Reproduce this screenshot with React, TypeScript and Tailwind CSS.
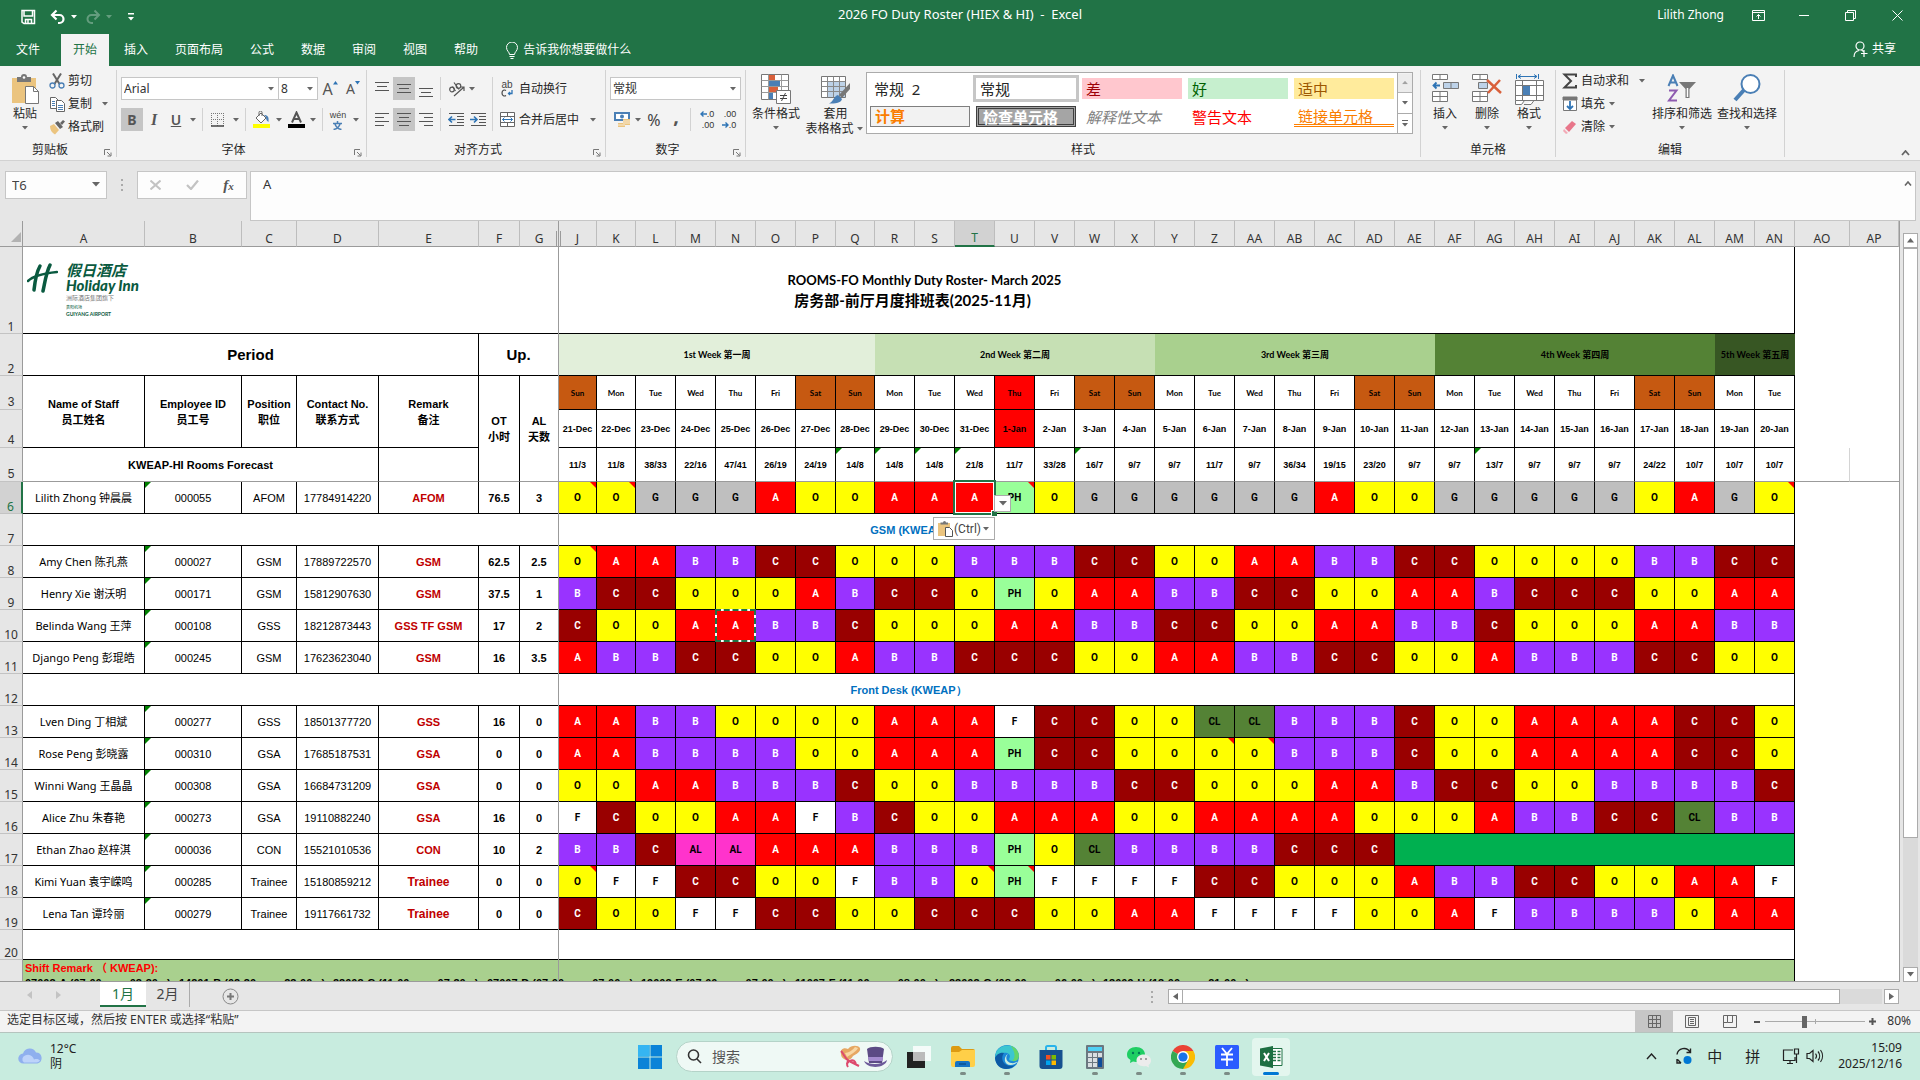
import React from "react";

const weeks = [
  { label: "1st Week 第一周", span: 8, cls: "bg-[#e2efda]" },
  { label: "2nd Week 第二周", span: 7, cls: "bg-[#c6e0b4]" },
  { label: "3rd Week 第三周", span: 7, cls: "bg-[#a9d08e]" },
  { label: "4th Week 第四周", span: 7, cls: "bg-[#548235]" },
  { label: "5th Week 第五周", span: 2, cls: "bg-[#375623]" },
];

const letters =
  "J K L M N O P Q R S T U V W X Y Z AA AB AC AD AE AF AG AH AI AJ AK AL AM AN".split(" ");

const days =
  "Sun Mon Tue Wed Thu Fri Sat Sun Mon Tue Wed Thu Fri Sat Sun Mon Tue Wed Thu Fri Sat Sun Mon Tue Wed Thu Fri Sat Sun Mon Tue".split(" ");

const dates =
  "21-Dec 22-Dec 23-Dec 24-Dec 25-Dec 26-Dec 27-Dec 28-Dec 29-Dec 30-Dec 31-Dec 1-Jan 2-Jan 3-Jan 4-Jan 5-Jan 6-Jan 7-Jan 8-Jan 9-Jan 10-Jan 11-Jan 12-Jan 13-Jan 14-Jan 15-Jan 16-Jan 17-Jan 18-Jan 19-Jan 20-Jan".split(" ");

const forecast =
  "11/3 11/8 38/33 22/16 47/41 26/19 24/19 14/8 14/8 14/8 21/8 11/7 33/28 16/7 9/7 9/7 11/7 9/7 36/34 19/15 23/20 9/7 9/7 13/7 9/7 9/7 9/7 24/22 10/7 10/7 10/7".split(" ");

const forecastFlags = ["Q", "R", "S", "T", "W", "AG"];

type Person = {
  row: number;
  name: string;
  id: string;
  pos: string;
  tel: string;
  remark: string;
  ot: string;
  al: string;
  shifts: string;
  notes?: string[];
};

const people: Person[] = [
  { row: 6, name: "Lilith Zhong 钟晨晨", id: "000055", pos: "AFOM", tel: "17784914220", remark: "AFOM", ot: "76.5", al: "3", shifts: "O O G G G A O O A A A PH O G G G G G G A O O G G G G G O A G O", notes: ["J", "K", "U", "AN"] },
  { row: 8, name: "Amy Chen 陈孔燕", id: "000027", pos: "GSM", tel: "17889722570", remark: "GSM", ot: "62.5", al: "2.5", shifts: "O A A B B C C O O O B B B C C O O A A B B C C O O O O B B C C", notes: ["J"] },
  { row: 9, name: "Henry Xie 谢沃明", id: "000171", pos: "GSM", tel: "15812907630", remark: "GSM", ot: "37.5", al: "1", shifts: "B C C O O O A B C C O PH O A A B B C C O O A A B C C C O O A A" },
  { row: 10, name: "Belinda Wang 王萍", id: "000108", pos: "GSS", tel: "18212873443", remark: "GSS TF GSM", ot: "17", al: "2", shifts: "C O O A A B B C O O O A A B B C C O O A A B B C O O O A A B B" },
  { row: 11, name: "Django Peng 彭琨皓", id: "000245", pos: "GSM", tel: "17623623040", remark: "GSM", ot: "16", al: "3.5", shifts: "A B B C C O O A B B C C C O O A A B B C C O O A B B B C C O O" },
  { row: 13, name: "Lven Ding 丁相斌", id: "000277", pos: "GSS", tel: "18501377720", remark: "GSS", ot: "16", al: "0", shifts: "A A B B O O O O A A A F C C O O CL CL B B B C O O A A A A C C O" },
  { row: 14, name: "Rose Peng 彭晓露", id: "000310", pos: "GSA", tel: "17685187531", remark: "GSA", ot: "0", al: "0", shifts: "A A B B B B O O A A A PH C C O O O O B B B C O O A A A A C C O", notes: ["Z", "AA"] },
  { row: 15, name: "Winni Wang 王晶晶", id: "000308", pos: "GSA", tel: "16684731209", remark: "GSA", ot: "0", al: "0", shifts: "O O A A B B B C O O B B B B C C O O O A A B C C O O B B B B C" },
  { row: 16, name: "Alice Zhu 朱春艳", id: "000273", pos: "GSA", tel: "19110882240", remark: "GSA", ot: "16", al: "0", shifts: "F C O O A A F B C O O A A A O O A A A A O O O A B B C C CL B B" },
  { row: 17, name: "Ethan Zhao 赵梓淇", id: "000036", pos: "CON", tel: "15521010536", remark: "CON", ot: "10", al: "2", shifts: "B B C AL AL A A A B B B PH O CL B B B B C C C" },
  { row: 18, name: "Kimi Yuan 袁宇嵘鸣", id: "000285", pos: "Trainee", tel: "15180859212", remark: "Trainee", ot: "0", al: "0", shifts: "O F F C C O O F B B O PH F F F F C C O O O A B B C C O O A A F", notes: ["J", "T", "U"] },
  { row: 19, name: "Lena Tan 谭玲丽", id: "000279", pos: "Trainee", tel: "19117661732", remark: "Trainee", ot: "0", al: "0", shifts: "C O O F F C C O O C C C O O A A F F F F O O A F B B B B O A A" },
];

const shiftColors: Record<string, string> = {
  O: "bg-[#ffff00]",
  A: "bg-[#ff0000] text-white",
  B: "bg-[#9933ff] text-white",
  C: "bg-[#990000] text-white",
  G: "bg-[#bfbfbf]",
  F: "bg-white",
  PH: "bg-[#99ff99]",
  CL: "bg-[#548235]",
  AL: "bg-[#ff33cc]",
};

const shiftTimes = [
  "07003-A (07:00 —— 03:30",
  "14201-B (02:30 —— 23:00",
  "23003-C (11:00 —— 07:30",
  "07007-D (07:00 —— 07:00",
  "19003-E (07:00 —— 07:00",
  "11007-F (11:00 —— 08:00",
  "23003-G (08:00 —— 06:00",
  "13009-H (13:00 —— 21:00",
];

const cell = "relative border-r border-b border-black p-0 text-center align-middle whitespace-nowrap";

const Caret = ({ className = "w-3" }: { className?: string }) => (
  <span className={`flex shrink-0 items-center justify-center ${className}`}>
    <svg width="6" height="4" viewBox="0 0 6 4" fill="#666">
      <path d="M0 0h6L3 3.5z" />
    </svg>
  </span>
);

const Sep = ({ className = "mx-[3px]" }: { className?: string }) => (
  <span className={`w-px shrink-0 self-stretch bg-[#d2d2d2] ${className}`} />
);

const Launcher = () => (
  <svg width="8" height="8" viewBox="0 0 8 8" fill="none" stroke="#777" className="absolute right-1 bottom-0">
    <path d="M.5 6V.5H6M3 3l3.5 3.5M7 3.5V7H3.5" />
  </svg>
);

const Group = ({ label, width, launcher, children }: { label: string; width: string; launcher?: boolean; children: React.ReactNode }) => (
  <section className={`relative flex h-[87px] shrink-0 flex-col border-r border-[#d2d2d2] ${width}`}>
    <div className="flex h-[73px]">{children}</div>
    <div className="text-center leading-[14px]">{label}</div>
    {launcher && <Launcher />}
  </section>
);

const Big = ({ icon, label, width, caret = true }: { icon: React.ReactNode; label: string; width: string; caret?: boolean }) => (
  <button className={`flex shrink-0 flex-col items-center pt-1 ${width}`}>
    <span className="flex h-8 items-start justify-center">{icon}</span>
    <span className="leading-[15px] whitespace-nowrap">{label}</span>
    {caret && <Caret className="h-3.5" />}
  </button>
);

const Tool = ({ children, width = "w-6", active }: { children: React.ReactNode; width?: string; active?: boolean }) => (
  <button className={`flex h-[23px] shrink-0 items-center justify-center ${width} ${active ? "bg-[#c5c5c5]" : ""}`}>{children}</button>
);

const Lines = ({ d }: { d: string }) => (
  <svg width="16" height="16" viewBox="0 0 16 16" stroke="#555" fill="none">
    <path d={d} />
  </svg>
);

const Combo = ({ value, label, width }: { value: string; label: string; width: string }) => (
  <span className={`relative shrink-0 ${width}`}>
    <select aria-label={label} defaultValue={value} className="h-[23px] w-full appearance-none border border-[#c6c6c6] bg-white px-0.5 text-[#333]">
      <option>{value}</option>
    </select>
    <Caret className="pointer-events-none absolute top-2.5 right-[5px]" />
  </span>
);

const TitleBar = () => (
  <header className="grid h-[34px] shrink-0 grid-cols-3 items-center bg-[#217346] pb-1 text-white">
    <div className="flex items-center pt-1 pl-5">
      <button aria-label="Save" className="w-[30px]">
        <svg width="16" height="16" viewBox="0 0 16 16" fill="none" stroke="#fff" strokeWidth="1.5">
          <path d="M2 1.5h12.5v13H4L2 13zM4 2v5h8.500V2M5.500 14.500v-4h6v4" />
          <path d="M8 11v3" />
        </svg>
      </button>
      <button aria-label="Undo" className="w-[17px]">
        <svg width="16" height="16" viewBox="0 0 16 16" fill="none" stroke="#fff" strokeWidth="2.200">
          <path d="M2 6h7.500a4 4 0 0 1 0 8H8M6.500 1.500 2 6l4.500 4.500" />
        </svg>
      </button>
      <svg width="6" height="4" className="ml-1" fill="#fff"><path d="M0 0h6L3 3.500z" /></svg>
      <button aria-label="Redo" className="ml-2 w-[17px] opacity-30">
        <svg width="16" height="16" viewBox="0 0 16 16" fill="none" stroke="#fff" strokeWidth="2">
          <path d="M14 6H6.500a4 4 0 0 0 0 8H8M9.500 1.500 14 6l-4.500 4.500" />
        </svg>
      </button>
      <svg width="6" height="4" className="ml-1 opacity-30" fill="#fff"><path d="M0 0h6L3 3.500z" /></svg>
      <svg width="6" height="8" className="ml-4" fill="#fff"><path d="M0 0h6v1.500H0zM0 4h6L3 7.500z" /></svg>
    </div>
    <h1 className="text-center text-[13px] font-normal whitespace-pre">2026 FO Duty Roster (HIEX &amp; HI)  -  Excel</h1>
    <div className="flex items-center justify-end">
      <span className="mr-5">Lilith Zhong</span>
      <button aria-label="Ribbon options" className="flex w-[46px] justify-center pr-[18px]">
        <svg width="13" height="11" viewBox="0 0 13 11" fill="none" stroke="#fff"><path d="M.5.5h12v10H.5zM.5 2.500h12M6.500 9V4.500M4.500 6.500l2-2 2 2" /></svg>
      </button>
      <button aria-label="Minimize" className="flex w-[46px] justify-center pr-[18px]">
        <svg width="10" height="10" stroke="#fff"><path d="M0 5.500h10" /></svg>
      </button>
      <button aria-label="Restore" className="flex w-[46px] justify-center pr-[18px]">
        <svg width="11" height="11" viewBox="0 0 11 11" fill="none" stroke="#fff"><path d="M.5 2.500h8v8h-8zM2.500 2.500v-2h8v8h-2" /></svg>
      </button>
      <button aria-label="Close" className="flex w-[38px] justify-center pr-2">
        <svg width="11" height="11" viewBox="0 0 11 11" stroke="#fff"><path d="M.5.5l10 10M10.500.5l-10 10" /></svg>
      </button>
    </div>
  </header>
);

const Tabs = () => (
  <nav className="flex h-8 shrink-0 items-stretch bg-[#217346] text-white">
    <button className="w-[58px] pr-0.5">文件</button>
    <div className="ml-[3px] flex gap-[3px]">
      <button className="bg-[#f3f3f3] px-3 text-[#217346]">开始</button>
      {["插入", "页面布局", "公式", "数据", "审阅", "视图", "帮助"].map((t) => (
        <button key={t} className="px-3">{t}</button>
      ))}
    </div>
    <button className="ml-4 flex items-center gap-[5px]">
      <svg width="12" height="17" viewBox="0 0 12 17" fill="none" stroke="#fff"><path d="M3.500 12.500c0-2.500-3-3.500-3-7a5.300 5.300 0 0 1 11 0c0 3.500-3 4.500-3 7zM3.500 14.500h5M4.500 16.500h3" /></svg>
      告诉我你想要做什么
    </button>
    <button className="mr-6 ml-auto flex items-center gap-1 pb-0.5">
      <svg width="15" height="17" viewBox="0 0 15 17" fill="none" stroke="#fff" strokeWidth="1.200"><circle cx="7" cy="5" r="4" /><path d="M1 16c0-4 2-6 5-6.500M8.500 9l2 1.500M11 9v7M8 12.500h6.500" /></svg>
      共享
    </button>
  </nav>
);

const Ribbon = () => (
  <div className="flex h-[95px] shrink-0 border-b border-[#d2d2d2] bg-[#f3f3f3] pt-1">
    <Group label="剪贴板" width="w-[117px] pr-4" launcher>
      <Big
        width="ml-[3px] w-[44px]"
        label="粘贴"
        icon={
          <svg width="30" height="31" viewBox="0 0 30 31">
            <path d="M2 4h24v25H2z" fill="#ebc47f" />
            <path d="M7 3h4a3 3 0 0 1 6 0h4v5H7z" fill="#777" />
            <circle cx="14" cy="3.500" r="1.300" fill="#fff" />
            <path d="M15.500 12.500h8l5 5v12h-13z" fill="#fff" stroke="#777" />
            <path d="M23.500 12.500v5h5" fill="none" stroke="#777" />
          </svg>
        }
      />
      <div className="ml-0.5 flex shrink-0 flex-col whitespace-nowrap">
        <button className="flex h-[22px] items-center gap-[3px]">
          <svg width="16" height="16" viewBox="0 0 16 16" fill="none"><path d="M4 .5 10.500 11M12 .5 5.500 11" stroke="#666" strokeWidth="2" /><circle cx="3.500" cy="12.500" r="2.500" stroke="#4a7fb5" strokeWidth="1.300" /><circle cx="12.500" cy="12.500" r="2.500" stroke="#4a7fb5" strokeWidth="1.300" /></svg>
          剪切
        </button>
        <button className="flex h-6 items-center gap-[3px]">
          <svg width="16" height="16" viewBox="0 0 16 16" fill="#fff" stroke="#666"><path d="M1.500 1.500h5l3 3v8h-8z" /><path d="M7.500 4.500h5l3 3v8h-8z" /><path d="M3 5.500h3M3 7.500h3M3 9.500h3M9 9.500h5M9 11.500h5M9 13.500h5" stroke="#4a7fb5" /></svg>
          复制
          <Caret className="ml-1 w-3" />
        </button>
        <button className="flex h-[22px] items-center gap-[3px]">
          <svg width="16" height="16" viewBox="0 0 16 16"><path d="M1 7l4-2 5 6-4 4.500C3 14 1 11 1 7z" fill="#ebc47f" /><path d="M6 4l3-2 5 6-3 2zM11 4l3-3 2 1.500-3 3.500z" fill="#666" /></svg>
          格式刷
        </button>
      </div>
    </Group>

    <Group label="字体" width="w-[250px] pr-4" launcher>
      <div className="flex flex-col gap-2 pt-[7px] pl-1">
        <div className="flex">
          <Combo label="字体" value="Arial" width="w-[158px]" />
          <Combo label="字号" value="8" width="-ml-px w-[40px]" />
          <Tool width="w-6">
            <span className="text-base text-[#555]">A</span>
            <svg width="5" height="4" className="mb-3" fill="#2e74b5"><path d="M0 3.500h5L2.500 0z" /></svg>
          </Tool>
          <Tool width="w-[22px]">
            <span className="text-sm text-[#555]">A</span>
            <svg width="5" height="4" className="mb-3" fill="#2e74b5"><path d="M0 0h5L2.500 3.500z" /></svg>
          </Tool>
        </div>
        <div className="flex">
          <Tool width="w-[22px]" active><b className="text-sm text-[#555]">B</b></Tool>
          <Tool width="w-[22px]"><i className="font-[Liberation_Serif] text-base font-bold text-[#555]">I</i></Tool>
          <Tool width="w-[22px]"><u className="text-sm font-semibold text-[#555]">U</u></Tool>
          <Caret />
          <Sep />
          <Tool><svg width="14" height="14" viewBox="0 0 14 14" fill="none" stroke="#777"><path d="M.5 0v13M6.500 0v13M12.500 0v13M0 .5h13M0 6.500h13" strokeDasharray="1 1" /><path d="M0 13h13" stroke="#444" strokeWidth="1.500" /></svg></Tool>
          <Caret />
          <Sep />
          <Tool><svg width="17" height="17" viewBox="0 0 17 17"><path d="M0 13h17v4H0z" fill="#ff0" /><path d="M3 7l5-5 5 5-5 5z" fill="#fff" stroke="#666" /><path d="M6 5V1.500a1.500 1.500 0 0 1 3 0V5" fill="none" stroke="#666" /><path d="M11 4c4 0 5 2 4.500 7-2-1-2.500-3-2.500-5z" fill="#4a7fb5" /></svg></Tool>
          <Caret />
          <Tool width="w-[22px]"><svg width="17" height="17" viewBox="0 0 17 17"><path d="M0 13h17v4H0z" /><path d="M4 11.500 8.500 1.500l4.500 10M5.500 8h6" fill="none" stroke="#555" strokeWidth="2" /></svg></Tool>
          <Caret />
          <Sep />
          <Tool>
            <span className="flex flex-col items-center font-[Liberation_Sans,Noto_Sans_CJK_SC] text-[9px] leading-[11px] text-[#444]">
              wén
              <svg width="9" height="9" viewBox="0 0 9 9" fill="none" stroke="#4a7fb5" strokeWidth="1.500"><path d="M4.500 0v2M0 2.500h9M7 3C6 6 4 8 .5 8.500M2 3c1 3 3 5 6.500 5.500" /></svg>
            </span>
          </Tool>
          <Caret />
        </div>
      </div>
    </Group>

    <Group label="对齐方式" width="w-[239px] pr-4" launcher>
      <div className="flex pt-[7px] pl-1">
        <div className="flex flex-col gap-2">
          <div className="flex">
            <Tool width="w-[22px]"><Lines d="M1 1.500h14M3 5.500h10M1 9.500h14" /></Tool>
            <Tool width="w-[22px]" active><Lines d="M1 3.500h14M3 7.500h10M1 11.500h14" /></Tool>
            <Tool width="w-[22px]"><Lines d="M1 7.500h14M3 11.500h10M1 15.500h14" /></Tool>
            <Sep />
            <Tool><svg width="17" height="16" viewBox="0 0 17 16" fill="none" stroke="#555" strokeWidth="1.200"><circle cx="4" cy="8.500" r="2.300" /><path d="M4.500 5.500l3 4.500M6 1.500l5 7" /><circle cx="10.500" cy="5" r="2.300" /><path d="M6 15 15.500 6.500M12 6h4v4" /></svg></Tool>
            <Caret className="w-2" />
          </div>
          <div className="flex">
            <Tool width="w-[22px]"><Lines d="M1 1.500h14M1 5.500h9M1 9.500h14M1 13.500h9" /></Tool>
            <Tool width="w-[22px]" active><Lines d="M1 1.500h14M3 5.500h10M1 9.500h14M3 13.500h10" /></Tool>
            <Tool width="w-[22px]"><Lines d="M1 1.500h14M6 5.500h9M1 9.500h14M6 13.500h9" /></Tool>
            <Sep />
            <Tool><svg width="16" height="14" viewBox="0 0 16 14" fill="none" stroke="#555"><path d="M1 .5h15M9 3.500h7M9 6.500h7M9 9.500h7M1 12.500h15" /><path d="M7.500 6.500H1M4 3.500l-3 3 3 3" stroke="#2e74b5" strokeWidth="1.600" /></svg></Tool>
            <Tool width="w-5"><svg width="16" height="14" viewBox="0 0 16 14" fill="none" stroke="#555"><path d="M1 .5h15M9 3.500h7M9 6.500h7M9 9.500h7M1 12.500h15" /><path d="M0 6.500h6.500M4 3.500l3 3-3 3" stroke="#2e74b5" strokeWidth="1.600" /></svg></Tool>
          </div>
        </div>
        <Sep className="mx-1 mb-3" />
        <div className="flex flex-col gap-2 whitespace-nowrap">
          <button className="flex h-[23px] items-center gap-0.5">
            <span className="flex w-5 flex-col items-center font-[Liberation_Sans] text-[10px] leading-[9px] text-[#444]">
              ab
              <svg width="12" height="8" viewBox="0 0 12 8" fill="none"><path d="M5 1.500C3.500.5 1 1 1 4s2.500 3.500 4 2.500" stroke="#444" strokeWidth="1.200" /><path d="M11 1v3.500H7.500M9 3 7.500 4.500 9 6" stroke="#2e74b5" strokeWidth="1.300" /></svg>
            </span>
            自动换行
          </button>
          <button className="flex h-[23px] items-center gap-0.5">
            <span className="flex w-5 justify-center">
              <svg width="15" height="15" viewBox="0 0 15 15" fill="#fff" stroke="#666"><path d="M.5.5h14v14H.5zM.5 4.500h14M.5 10.500h14M7.500.5v4M7.500 10.500v4" /><path d="M2.500 7.500h10M4.500 5.500l-2 2 2 2M10.500 5.500l2 2-2 2" fill="none" stroke="#2e74b5" /></svg>
            </span>
            合并后居中
            <Caret className="ml-1.5 w-3" />
          </button>
        </div>
      </div>
    </Group>

    <Group label="数字" width="w-[140px] pr-4" launcher>
      <div className="flex flex-col gap-2 pt-[7px] pl-1">
        <Combo label="数字格式" value="常规" width="w-[131px]" />
        <div className="flex">
          <Tool><svg width="17" height="17" viewBox="0 0 17 17"><path d="M0 1h16v9H0z" fill="#4a7fb5" /><path d="M2 3h12v5H2z" fill="#fff" /><circle cx="8" cy="5.500" r="2" fill="#4a7fb5" /><path d="M9 8h7v6H9zM4 12h7v4H4z" fill="#ebc47f" /><path d="M9 10h7M9 12h7M4 14h7" stroke="#fff" strokeWidth=".7" /></svg></Tool>
          <Caret className="w-2" />
          <Tool><span className="text-base text-[#444]">%</span></Tool>
          <Tool width="w-5"><b className="mb-2 text-xl text-[#555]">,</b></Tool>
          <Sep className="mx-1" />
          <Tool>
            <span className="flex flex-col items-end font-[Liberation_Sans] text-[9px] leading-[11px] text-[#333]">
              <span className="flex items-center"><svg width="7" height="6" viewBox="0 0 7 6" fill="none" stroke="#2e74b5" strokeWidth="1.400"><path d="M7 3H1M3.500.5 1 3l2.500 2.500" /></svg>.0</span>
              <span>.00</span>
            </span>
          </Tool>
          <Tool width="w-5">
            <span className="flex flex-col items-end font-[Liberation_Sans] text-[9px] leading-[11px] text-[#333]">
              <span>.00</span>
              <span className="flex items-center"><svg width="7" height="6" viewBox="0 0 7 6" fill="none" stroke="#2e74b5" strokeWidth="1.400"><path d="M0 3h6M3.500.5 6 3 3.500 5.500" /></svg>.0</span>
            </span>
          </Tool>
        </div>
      </div>
    </Group>

    <Group label="样式" width="w-[675px]">
      <Big
        width="ml-[5px] w-[50px]"
        label="条件格式"
        icon={
          <svg width="31" height="31" viewBox="0 0 31 31">
            <path d="M.5.500h27v25H.5z" fill="#fff" stroke="#777" />
            <path d="M.5 6.500h27M.5 12.500h27M.5 18.500h27M7.500.500v25M20.500.500v25" stroke="#999" />
            <path d="M8 1h6v5H8zM8 13h9v5H8z" fill="#d9603b" />
            <path d="M8 7h11v5H8zM8 19h4v6H8z" fill="#4a7fb5" />
            <path d="M15.500 16.500h14v13h-14z" fill="#fff" stroke="#777" />
            <path d="M19 21.500h7M19 24.500h7M24.500 19l-4 8" stroke="#444" />
          </svg>
        }
      />
      <button className="ml-1 flex w-[61px] shrink-0 flex-col items-center pt-1">
        <svg width="30" height="30" viewBox="0 0 30 30">
          <path d="M.5 2.500h24v21H.5z" fill="#fff" stroke="#777" />
          <path d="M6 8h18v15H6z" fill="#bdd2e8" />
          <path d="M.5 7.500h24M.5 12.500h24M.5 17.500h24M6.500 2.500v21M12.500 2.500v21M18.500 2.500v21" stroke="#888" fill="none" />
          <path d="M29 9v6l-8 9-3-3z" fill="#777" />
          <path d="M17 21l4 4c-1 4-7 5-13 4.500 4-1.500 5-7.500 9-8.500z" fill="#4a7fb5" />
        </svg>
        <span className="mt-0.5 leading-[15px]">套用</span>
        <span className="flex leading-[15px] whitespace-nowrap">表格格式<Caret className="w-3" /></span>
      </button>
      <div className="mt-0.5 flex h-[62px] w-[547px] shrink-0 border border-[#ababab] bg-white">
        <div className="grid grid-cols-[repeat(5,100px)] content-start gap-x-1.5 gap-y-[7px] pt-[5px] pl-[3px] text-[15px] leading-5 *:h-[21px] *:px-1 *:text-left">
          <button>常规&nbsp; 2</button>
          <button className="bg-white outline-3 outline-[#c6c6c6]">常规</button>
          <button className="bg-[#ffc7ce] text-[#9c0006]">差</button>
          <button className="bg-[#c6efce] text-[#006100]">好</button>
          <button className="bg-[#ffeb9c] text-[#9c5700]">适中</button>
          <button className="border border-[#7f7f7f] bg-[#f2f2f2] leading-[17px] font-bold text-[#fa7d00]">计算</button>
          <button className="border-3 border-double border-[#3f3f3f] bg-[#a5a5a5] leading-3 font-bold text-white">检查单元格</button>
          <button className="text-[#7f7f7f] italic">解释性文本</button>
          <button className="text-[#ff0000]">警告文本</button>
          <button className="border-b-3 border-double border-[#ff8001] text-[#fa7d00]">链接单元格</button>
        </div>
        <div className="ml-auto flex w-[15px] flex-col border-l border-[#ababab]">
          <button aria-label="上一行" className="flex flex-1 rotate-180 items-center justify-center bg-[#e1e1e1] opacity-60"><Caret /></button>
          <button aria-label="下一行" className="flex flex-1 items-center justify-center border-t border-[#ababab]"><Caret /></button>
          <button aria-label="其他" className="flex flex-1 flex-col items-center justify-center gap-0.5 border-t border-[#ababab]"><span className="h-px w-1.5 bg-[#666]" /><Caret /></button>
        </div>
      </div>
    </Group>

    <Group label="单元格" width="w-[135px]">
      <Big width="ml-[3px] w-[42px]" label="插入" icon={
        <svg width="27" height="28" viewBox="0 0 27 28" fill="#fff" stroke="#777">
          <path d="M.5.500h15v5H.5zM8 .5v5M.5 17.500h15v10H.5zM8 17.500v10M.5 22.500h15" />
          <path d="M11.500 8.500h15v6h-15z" fill="#bdd2e8" /><path d="M19 8.500v6" />
          <path d="M8 11.500H1.500M4.500 8.500l-3 3 3 3" fill="none" stroke="#2e74b5" strokeWidth="1.800" />
        </svg>
      } />
      <Big width="w-[42px]" label="删除" icon={
        <svg width="30" height="28" viewBox="0 0 30 28" fill="#fff" stroke="#777">
          <path d="M.5.500h15v5H.5zM8 .5v5M.5 17.500h15v10H.5zM8 17.500v10M.5 22.500h15" />
          <path d="M6.500 8.500h9v6h-9z" fill="#bdd2e8" />
          <path d="M15 6l14 13M28 6 16 19" stroke="#d9603b" strokeWidth="2.500" />
        </svg>
      } />
      <Big width="w-[42px]" label="格式" icon={
        <svg width="29" height="31" viewBox="0 0 29 31" fill="#fff" stroke="#777">
          <path d="M.5 6.500h28v20H.5zM.5 11.500h28M.5 21.500h28M7.500 6.500v20M21.500 6.500v20M.5 26.500v4h6l3-4M9 30.500h7l3-4" />
          <path d="M8 12h7v9H8z" fill="#4a7fb5" stroke="none" />
          <path d="M1.500 0v5M23.500 0v5M3 2.500h19M6 .5l-3 2 3 2M19 .5l3 2-3 2" stroke="#2e74b5" fill="none" />
        </svg>
      } />
    </Group>

    <Group label="编辑" width="w-[229px]">
      <div className="flex w-[92px] shrink-0 flex-col pl-1.5 whitespace-nowrap *:gap-[3px]">
        <button className="flex h-[22px] items-center">
          <svg width="16" height="16" viewBox="0 0 16 16" fill="none" stroke="#444" strokeWidth="2" className="shrink-0"><path d="M14 4V1.500H2.500L9 8l-6.500 6.500H14V12" /></svg>
          自动求和<Caret className="ml-1 w-3" />
        </button>
        <button className="flex h-6 items-center">
          <svg width="16" height="16" viewBox="0 0 16 16" fill="#fff" stroke="#777" className="shrink-0"><path d="M1.500 1.500h13v13h-13z" /><path d="M1 1h14v3H1z" fill="#777" /><path d="M8 5v8M5 10l3 3 3-3" fill="none" stroke="#2e74b5" strokeWidth="1.800" /></svg>
          填充<Caret className="w-2" />
        </button>
        <button className="flex h-[22px] items-center">
          <svg width="16" height="16" viewBox="0 0 16 16" className="shrink-0"><path d="M3 9l7-7 4 3-7 8z" fill="#e8768a" /><path d="M2 10l4 4-2 1-3-3z" fill="#f3aab6" /></svg>
          清除<Caret className="w-2" />
        </button>
      </div>
      <Big width="ml-px w-[66px]" label="排序和筛选" icon={
        <svg width="30" height="28" viewBox="0 0 30 28" fill="none">
          <path d="M1.500 12 6 1.500 10.500 12M3 8.500h6" stroke="#4a7fb5" strokeWidth="2" />
          <path d="M2 16.500h7.500L2 26.500h8" stroke="#8e5bb0" strokeWidth="2" />
          <path d="M12 8h17l-6.500 7v9h-4v-9z" fill="#777" />
          <path d="M20.500 14v9" stroke="#fff" strokeWidth="1.500" />
        </svg>
      } />
      <Big width="w-[64px]" label="查找和选择" icon={
        <svg width="28" height="28" viewBox="0 0 28 28"><path d="M11 16 2 26" stroke="#4a7fb5" strokeWidth="4" /><circle cx="17.500" cy="10" r="9" fill="#fff" stroke="#4a7fb5" strokeWidth="2" /></svg>
      } />
    </Group>
    <button aria-label="折叠功能区" className="mr-2.5 mb-1 ml-auto self-end">
      <svg width="9" height="6" viewBox="0 0 9 6" fill="none" stroke="#666" strokeWidth="1.800"><path d="M1 5l3.500-4L8 5" /></svg>
    </button>
  </div>
);

const FormulaBar = () => (
  <div className="flex h-[60px] shrink-0 items-start bg-[#e6e6e6] pt-2.5 pr-1 pl-[5px]">
    <div className="relative">
      <input aria-label="名称框" defaultValue="T6" className="h-7 w-[102px] border border-[#c6c6c6] bg-[#fdfdfd] px-1.5 text-[13px] text-[#444]" />
      <svg width="8" height="5" fill="#666" className="absolute top-[11px] right-[7px]"><path d="M0 0h8L4 4.500z" /></svg>
    </div>
    <div className="flex h-7 w-[30px] flex-col items-center justify-center gap-[3px]">
      <i className="size-0.5 bg-[#aaa]" /><i className="size-0.5 bg-[#aaa]" /><i className="size-0.5 bg-[#aaa]" />
    </div>
    <div className="flex h-7 w-[110px] items-center justify-around border border-[#c6c6c6] bg-[#fdfdfd]">
      <button aria-label="取消"><svg width="11" height="10" viewBox="0 0 11 10" stroke="#c3c3c3" strokeWidth="2"><path d="M.5.500l10 9M10.500.500l-10 9" /></svg></button>
      <button aria-label="输入"><svg width="13" height="10" viewBox="0 0 13 10" fill="none" stroke="#c3c3c3" strokeWidth="2.200"><path d="M1 5l4 4 7-8.500" /></svg></button>
      <button aria-label="插入函数" className="font-[Liberation_Serif] text-[15px] font-bold text-[#555] italic">f<span className="text-[11px]">x</span></button>
    </div>
    <textarea aria-label="编辑栏" defaultValue="A" className="ml-[3px] h-[50px] flex-1 resize-none border border-[#c6c6c6] bg-[#fdfdfd] px-3 py-[3px] text-[13px] text-[#333]" />
    <svg width="8" height="5" viewBox="0 0 8 5" fill="none" stroke="#666" strokeWidth="1.600" className="mt-2.5 mr-1 -ml-3"><path d="M1 4.500 4 1l3 3.500" /></svg>
  </div>
);

const RowHead = ({ n, active }: { n: number; active?: boolean }) => (
  <th
    scope="row"
    className={`border-b border-b-[#c3c3c3] p-0 text-center align-bottom text-[12px] leading-[13px] font-normal ${
      active ? "border-r-2 border-r-[#217346] bg-[#d2d2d2] text-[#217346]" : "border-r border-r-[#9b9b9b] bg-[#e6e6e6] text-[#333]"
    }`}
  >
    {n}
  </th>
);

const Flag = () => <i className="absolute top-0 left-0 size-[6px] bg-[#008000] [clip-path:polygon(0_0,100%_0,0_100%)]" />;
const Note = () => <i className="absolute top-0 right-0 size-[6px] bg-[#ff0000] [clip-path:polygon(0_0,100%_0,100%_100%)]" />;

const Logo = () => (
  <div className="absolute top-4 left-1 flex items-start gap-2 text-left font-normal text-[#0a5a40]">
    <svg width="31" height="30" viewBox="0 0 31 30" fill="none" stroke="#0a5a40" strokeLinecap="round">
      <path d="M13 3C9 10 8 18 7 27" strokeWidth="3.500" />
      <path d="M23 2C19 10 18 19 16 28" strokeWidth="3.500" />
      <path d="M1 18C7 12 20 10 30 9" strokeWidth="2.500" />
    </svg>
    <div className="flex flex-col">
      <b className="text-[15px] leading-[15px] italic">假日酒店</b>
      <b className="font-[Lato] text-[15px] leading-[15px] font-black italic">Holiday Inn</b>
      <span className="text-[6px] leading-[10px] text-[#777]">洲际酒店集团旗下</span>
      <span className="text-[4px] leading-[9px]">贵阳机场</span>
      <b className="text-[5px] leading-[5px]">GUIYANG AIRPORT</b>
    </div>
  </div>
);

const ActiveOverlay = () => (
  <>
    <span className="absolute -inset-0.5 z-10 border-2 border-[#217346]">
      <span className="block size-full border border-white" />
      <span className="absolute -right-[3px] -bottom-[3px] size-[6px] border-t border-l border-white bg-[#217346]" />
    </span>
    <button aria-label="选择班次" className="absolute top-[13px] left-full z-20 flex size-[17px] items-center justify-center border border-[#ababab] bg-white">
      <svg width="8" height="5" fill="#666"><path d="M0 0h8L4 4.500z" /></svg>
    </button>
    <button className="absolute top-[35px] -left-[22px] z-20 flex h-[23px] w-[62px] items-center justify-center gap-px border border-[#ababab] bg-white text-[12px] font-normal text-[#444]">
      <svg width="15" height="17" viewBox="0 0 15 17"><path d="M0 3h12v13H0z" fill="#ebc47f" /><path d="M2.500 4.500V2.500H5a1.500 1.500 0 0 1 3 0h2v2z" fill="#777" /><path d="M7.500 7.500h4l3 3v6h-7z" fill="#fff" stroke="#555" /></svg>
      (Ctrl)
      <Caret className="w-2" />
    </button>
  </>
);

const StaffRow = ({ p }: { p: Person }) => {
  const shifts = p.shifts.split(" ");
  return (
    <tr className="h-8">
      <RowHead n={p.row} active={p.row === 6} />
      <td className={cell}>{p.name}</td>
      <td className={`${cell} font-[Liberation_Sans]`}><Flag />{p.id}</td>
      <td className={`${cell} font-[Liberation_Sans]`}>{p.pos}</td>
      <td className={`${cell} font-[Liberation_Sans]`}>{p.tel}</td>
      <td className={`${cell} font-[Liberation_Sans] font-bold text-[#c00000] ${p.remark === "Trainee" ? "text-[12px]" : ""}`}>{p.remark}</td>
      <td className={`${cell} font-[Liberation_Sans] font-bold`}>{p.ot}</td>
      <td className={`${cell} border-r-[#9b9b9b] font-[Liberation_Sans] font-bold`}>{p.al}</td>
      {shifts.map((s, i) => (
        <td key={letters[i]} className={`${cell} font-[Roboto] text-[10px] font-bold ${shiftColors[s]}`}>
          {s}
          {p.notes?.includes(letters[i]) && <Note />}
          {p.row === 6 && letters[i] === "T" && <ActiveOverlay />}
          {p.row === 10 && letters[i] === "N" && (
            <span className="absolute -inset-px border-2 border-white">
              <span className="absolute -inset-0.5 border-2 border-dashed border-[#217346]" />
            </span>
          )}
        </td>
      ))}
      {shifts.length < 31 && <td colSpan={31 - shifts.length} className={`${cell} bg-[#00b050]`} />}
      <td colSpan={2} />
    </tr>
  );
};

const Band = ({ n, height, children }: { n: number; height: string; children?: React.ReactNode }) => (
  <tr className={height}>
    <RowHead n={n} />
    <td colSpan={38} className={`${cell} font-[Liberation_Sans] font-bold text-[#0070c0]`}>{children}</td>
    <td colSpan={2} />
  </tr>
);

const ColHead = ({ name }: { name: string }) => (
  <th
    scope="col"
    className={`border-r border-r-[#bdbdbd] p-0 align-bottom font-normal ${
      name === "T" ? "border-b-2 border-b-[#217346] bg-[#d2d2d2] leading-[14px] text-[#217346]" : "border-b border-b-[#9b9b9b] leading-[15px]"
    }`}
  >
    {name}
  </th>
);

const Sheet = () => (
  <div className="relative min-w-0 flex-1 overflow-hidden border-r border-b border-[#9b9b9b] bg-white">
    <table className="w-full table-fixed border-separate border-spacing-0 text-[11px] leading-4 text-black">
      <colgroup>
        <col className="w-[23px]" />
        <col className="w-[122px]" />
        <col className="w-[97px]" />
        <col className="w-[55px]" />
        <col className="w-[82px]" />
        <col className="w-[100px]" />
        <col className="w-[41px]" />
        <col className="w-[39px]" />
        {letters.map((l) => (
          <col key={l} className={l === "J" ? "w-[38px]" : l === "K" || l === "Q" ? "w-[39px]" : "w-[40px]"} />
        ))}
        <col className="w-[55px]" />
        <col />
      </colgroup>
      <thead>
        <tr className="h-[26px] bg-[#e6e6e6] text-[12px] text-[#333]">
          <td className="border-r border-b border-[#9b9b9b] p-0 align-bottom">
            <svg width="10" height="10" className="mb-1 ml-[11px]" fill="#b2b2b2"><path d="M10 0v10H0z" /></svg>
          </td>
          {["A", "B", "C", "D", "E", "F", "G", ...letters, "AO", "AP"].map((c) => (
            <ColHead key={c} name={c} />
          ))}
        </tr>
      </thead>
      <tbody>
        <tr className="h-[87px]">
          <RowHead n={1} />
          <td colSpan={38} className={`${cell} font-[Lato,Noto_Sans_CJK_SC,sans-serif] font-bold`}>
            <Logo />
            <p className="ml-8 text-[13px] leading-5">ROOMS-FO Monthly Duty Roster- March 2025</p>
            <p className="ml-2 text-[15px] leading-5">房务部-前厅月度排班表(2025-11月)</p>
          </td>
          <td colSpan={2} />
        </tr>
        <tr className="h-[42px]">
          <RowHead n={2} />
          <th colSpan={5} className={`${cell} font-[Liberation_Sans] text-[15px]`}>Period</th>
          <th colSpan={2} className={`${cell} border-r-[#9b9b9b] font-[Liberation_Sans] text-[15px]`}>Up.</th>
          {weeks.map((w) => (
            <th key={w.label} colSpan={w.span} className={`border-b border-black p-0 font-[Lato,Noto_Sans_CJK_SC,sans-serif] text-[9px] whitespace-nowrap ${w.cls}`}>{w.label}</th>
          ))}
          <td colSpan={2} />
        </tr>
        <tr className="h-[34px] font-[Liberation_Sans,Noto_Sans_CJK_SC,sans-serif]">
          <RowHead n={3} />
          <th rowSpan={2} className={cell}>Name of Staff<br />员工姓名</th>
          <th rowSpan={2} className={cell}>Employee ID<br />员工号</th>
          <th rowSpan={2} className={cell}>Position<br />职位</th>
          <th rowSpan={2} className={cell}>Contact No.<br />联系方式</th>
          <th rowSpan={2} className={cell}>Remark<br />备注</th>
          <th rowSpan={3} className={`${cell} border-b-[#9b9b9b]`}>OT<br />小时</th>
          <th rowSpan={3} className={`${cell} border-r-[#9b9b9b] border-b-[#9b9b9b]`}>AL<br />天数</th>
          {days.map((d, i) => (
            <th key={i} className={`${cell} font-[Lato] text-[8px] ${i === 11 ? "bg-[#ff0000]" : d[0] === "S" ? "bg-[#c65911]" : ""}`}>{d}</th>
          ))}
          <td colSpan={2} />
        </tr>
        <tr className="h-[38px] font-[Liberation_Sans]">
          <RowHead n={4} />
          {dates.map((d, i) => (
            <th key={d} className={`${cell} text-[9px] ${i === 11 ? "bg-[#ff0000]" : ""}`}>{d}</th>
          ))}
          <td colSpan={2} />
        </tr>
        <tr className="h-[34px] font-[Liberation_Sans]">
          <RowHead n={5} />
          <th colSpan={4} className={`${cell} border-b-[#9b9b9b]`}>KWEAP-HI Rooms Forecast</th>
          <td className={`${cell} border-b-[#9b9b9b]`} />
          {forecast.map((f, i) => (
            <td key={i} className={`${cell} border-b-[#9b9b9b] text-[9px] font-bold`}>
              {forecastFlags.includes(letters[i]) && <Flag />}
              {f}
            </td>
          ))}
          <td className="border-r border-b border-r-[#d4d4d4] border-b-[#9b9b9b]" />
          <td className="border-b border-[#9b9b9b]" />
        </tr>
        <StaffRow p={people[0]} />
        <Band n={7} height="h-8">GSM (KWEAP)</Band>
        {people.slice(1, 5).map((p) => <StaffRow key={p.id} p={p} />)}
        <Band n={12} height="h-8">Front Desk (KWEAP）</Band>
        {people.slice(5).map((p) => <StaffRow key={p.id} p={p} />)}
        <Band n={20} height="h-[30px]" />
        <tr className="h-16">
          <RowHead n={21} />
          <td colSpan={38} className="border-r border-black bg-[#a9d08e] px-0.5 py-px align-top font-[Liberation_Sans,Noto_Sans_CJK_SC,sans-serif] leading-[15px] font-bold">
            <p className="text-[#ff0000]">Shift Remark （ KWEAP):</p>
            <p className="flex">
              {shiftTimes.map((s) => (
                <span key={s} className="w-[154px] whitespace-pre">{s}   ),</span>
              ))}
            </p>
          </td>
          <td colSpan={2} />
        </tr>
      </tbody>
    </table>
    {/* frozen pane edge, hidden columns H and I sit behind it */}
    <span className="absolute inset-y-0 left-[558px] w-px bg-[#9b9b9b]" />
    <span className="absolute top-2.5 left-[556px] h-[15px] w-[5px] border-x border-[#9b9b9b]" />
  </div>
);

const VScroll = () => (
  <div className="flex w-5 shrink-0 flex-col bg-[#e6e6e6] pt-3 pr-0.5 pl-[3px]">
    <button aria-label="向上" className="flex h-[15px] items-center justify-center border border-[#ababab] bg-white">
      <svg width="7" height="5" fill="#666"><path d="M0 4.500h7L3.500 0z" /></svg>
    </button>
    <div className="flex-1 bg-[#dadada]">
      <div className="h-[82%] border border-[#ababab] bg-white" />
    </div>
    <button aria-label="向下" className="flex h-[15px] items-center justify-center border border-[#ababab] bg-white">
      <svg width="7" height="5" fill="#666"><path d="M0 0h7L3.500 4.500z" /></svg>
    </button>
  </div>
);

const SheetTabs = () => (
  <div className="flex h-[29px] shrink-0 items-start border-b border-[#c6c6c6] bg-[#e6e6e6] pr-[21px] text-[14px]">
    <div className="flex h-[25px] w-[100px] items-center gap-6 pl-[27px]">
      <svg width="5" height="8" fill="#c3c3c3"><path d="M5 0v8L0 4z" /></svg>
      <svg width="5" height="8" fill="#c3c3c3"><path d="M0 0v8l5-4z" /></svg>
    </div>
    <button className="h-[25px] w-[46px] border-b-2 border-[#217346] bg-white text-[#217346]">1月</button>
    <button className="h-[25px] w-[44px] border-r border-[#ababab] pb-0.5 text-[#444]">2月</button>
    <button aria-label="新工作表" className="ml-8 flex h-7 items-center">
      <svg width="17" height="17" viewBox="0 0 17 17" fill="none" stroke="#888"><circle cx="8.500" cy="8.500" r="7.500" /><path d="M8.500 5v7M5 8.500h7" strokeWidth="2" stroke="#777" /></svg>
    </button>
    <div className="mt-[7px] ml-auto flex h-[15px] w-[39.400%] items-stretch">
      <span className="mr-[15px] flex flex-col justify-around"><i className="size-0.5 bg-[#aaa]" /><i className="size-0.5 bg-[#aaa]" /><i className="size-0.5 bg-[#aaa]" /></span>
      <button aria-label="向左" className="flex w-[15px] items-center justify-center border border-[#ababab] bg-white"><svg width="5" height="7" fill="#666"><path d="M5 0v7L0 3.500z" /></svg></button>
      <div className="mr-0.5 flex-1 bg-[#dadada]">
        <div className="h-full w-[94%] border border-l-0 border-[#ababab] bg-white" />
      </div>
      <button aria-label="向右" className="flex w-[15px] items-center justify-center border border-[#ababab] bg-white"><svg width="5" height="7" fill="#666"><path d="M0 0v7l5-3.500z" /></svg></button>
    </div>
  </div>
);

const StatusBar = () => (
  <footer className="flex h-[22px] shrink-0 items-stretch border-b border-[#b5c4be] bg-[#f3f3f3] pr-[9px] text-[#333]">
    <span className="pl-[7px] text-[12px] leading-[18px]">选定目标区域，然后按 ENTER 或选择“粘贴”</span>
    <button aria-label="普通" className="ml-auto flex w-[38px] items-center justify-center bg-[#c6c6c6]">
      <svg width="13" height="13" viewBox="0 0 13 13" fill="none" stroke="#666"><path d="M.5.500h12v12H.5zM4.500.500v12M8.500.500v12M.5 4.500h12M.5 8.500h12" /></svg>
    </button>
    <button aria-label="页面布局" className="flex w-[38px] items-center justify-center">
      <svg width="14" height="13" viewBox="0 0 14 13" fill="none" stroke="#666"><path d="M.5.500h13v12H.5zM3.500 2.500h7v8h-7zM5 4.500h4M5 6.500h4M5 8.500h4" /></svg>
    </button>
    <button aria-label="分页预览" className="flex w-[38px] items-center justify-center">
      <svg width="14" height="13" viewBox="0 0 14 13" fill="none" stroke="#666"><path d="M.5.500h13v12H.5zM4.500.500v7h5v-7M.5 7.500h4" /></svg>
    </button>
    <button aria-label="缩小" className="flex w-4 items-center justify-center"><i className="h-0.5 w-1.5 bg-[#555]" /></button>
    <span className="relative flex w-[100px] items-center">
      <input
        type="range"
        aria-label="缩放"
        defaultValue={39}
        className="h-3 w-full appearance-none bg-[linear-gradient(#aaa,#aaa)] bg-[length:100%_1px] bg-center bg-no-repeat [&::-webkit-slider-thumb]:h-3 [&::-webkit-slider-thumb]:w-[5px] [&::-webkit-slider-thumb]:appearance-none [&::-webkit-slider-thumb]:bg-[#666]"
      />
      <i className="absolute left-1/2 h-[5px] w-px bg-[#aaa]" />
    </span>
    <button aria-label="放大" className="flex w-3.5 items-center justify-center"><svg width="7" height="7" stroke="#555" strokeWidth="2"><path d="M3.500 0v7M0 3.500h7" /></svg></button>
    <span className="w-8 text-right text-[12px] leading-5">80%</span>
  </footer>
);

const TaskIcon = ({ label, children, dot = true, active }: { label: string; children: React.ReactNode; dot?: boolean; active?: boolean }) => (
  <button aria-label={label} className="relative flex h-full w-11 items-center justify-center">
    <span className={`flex h-[38px] w-[38px] items-center justify-center ${active ? "rounded bg-[#e3f6ee]" : ""}`}>{children}</span>
    {dot && <i className={`absolute bottom-[5px] h-[3px] rounded-full ${active ? "w-4 bg-[#0078d4]" : "w-1.5 bg-[#7c8c86]"}`} />}
  </button>
);

const TaskBar = () => (
  <div className="grid h-[47px] shrink-0 grid-cols-[1fr_auto_1fr] items-center bg-[#c8ecdf] text-[#222]">
    <button className="flex items-center gap-[7px] pb-0.5 pl-[18px] text-left">
      <svg width="25" height="17" viewBox="0 0 25 17"><path d="M5.500 16.500a5 5 0 0 1-.5-10 7 7 0 0 1 13-1 5.600 5.600 0 0 1 1.500 11z" fill="#8fb0ee" /><path d="M6 15.500a4 4 0 0 1 1-7c5-2 8 1 9 4 3-1 5 0 6 1a5 5 0 0 1-3 2z" fill="#bdd3fa" /></svg>
      <span className="text-[12px] leading-[15px]">12°C<br />阴</span>
    </button>
    <div className="flex h-[47px] items-center pl-[11px]">
      <button aria-label="开始" className="mr-3.5">
        <svg width="24" height="24" viewBox="0 0 24 24" fill="#0a83d8"><path d="M0 0h11.500v11.500H0zM12.500 0H24v11.500H12.500zM0 12.500h11.500V24H0zM12.500 12.500H24V24H12.500z" /><path d="M0 0h11.500v11.500H0z" fill="#35b5f2" /></svg>
      </button>
      <label className="flex h-[31px] w-[217px] items-center rounded-full border border-[#b4d3c8] bg-[#eff9f5] pr-1 pl-2.5">
        <svg width="15" height="15" viewBox="0 0 15 15" fill="none" stroke="#333" strokeWidth="1.600"><circle cx="6.500" cy="6" r="5" /><path d="M10 10l4 4" /></svg>
        <input aria-label="搜索" placeholder="搜索" className="ml-2.5 w-0 flex-1 bg-transparent text-[14px] placeholder:text-[#555]" />
        <svg width="49" height="24" viewBox="0 0 49 24">
          <path d="M2 9C1 4 5 2 9 4c3-4 10-4 12-1 1 4-4 6-7 8-2 4-6 5-9 3-2-1-3-3-3-5z" fill="#e6a763" />
          <path d="M6 8c3 0 8-3 10-6l3 1C17 7 12 9 8 12z" fill="#f8d7a4" />
          <path d="M2 6c3 3 4 8 8 10l10 5M9 15l-1 5M11 16c3-2 5 0 6 3M10 17c-2 0-3 2-1 5" stroke="#dd4a6d" strokeWidth="2" fill="none" />
          <path d="M28 4c3-3 14-3 17 0l-2 14H30z" fill="#5c4b85" />
          <path d="M29 12h15l-.5 4H30z" fill="#a58cd0" />
          <path d="M25 16c6 4 17 4 23-1-1 8-19 10-23 1z" fill="#6d5a9a" />
        </svg>
      </label>
      <div className="ml-1 flex h-full">
        <TaskIcon label="任务视图" dot={false}>
          <svg width="24" height="24" viewBox="0 0 24 24"><path d="M0 7h18v16H0z" fill="#222" /><path d="M6 1h18v15H6z" fill="#fff" opacity=".8" /><path d="M6 7h12v9H6z" fill="#bbb" /></svg>
        </TaskIcon>
        <TaskIcon label="文件资源管理器">
          <svg width="24" height="24" viewBox="0 0 24 24"><path d="M0 3a2 2 0 0 1 2-2h6l3 3h11a2 2 0 0 1 2 2v4H0z" fill="#dd9b12" /><path d="M0 7h8l3-2h13v15a2 2 0 0 1-2 2H2a2 2 0 0 1-2-2z" fill="#ffcf48" /><path d="M4 22v-4a2 2 0 0 1 2-2h11a2 2 0 0 1 2 2v4z" fill="#1573c4" /><path d="M8 19h7" stroke="#0b4f91" strokeWidth="1.500" /></svg>
        </TaskIcon>
        <TaskIcon label="Edge">
          <svg width="24" height="24" viewBox="0 0 24 24"><circle cx="12" cy="12" r="12" fill="#1b88d8" /><path d="M1 8C4-1 18-2 22.500 6c3 6 0 10-5 10-3 0-4-1-3-3 2-4-3-6-6-5C5 8 2 10 0 13z" fill="#3cc6d0" /><path d="M16 .8C22 3 25 9 23.500 13c-1 3-4 3.500-6.500 3 4-3 3-9-1-15z" fill="#64d56a" /><path d="M9 8c-4 5-1 13 7 13 3 0 5-1 6-3-6 9-21 8-22-5 1-3 5-6 9-5z" fill="#0c59a4" /><path d="M13 9c-3 3-2 8 3 9 3 .5 5-.5 6.500-1.500-1 2-4 3.500-7 3.500C9 20 8 12 13 9z" fill="#c8ecdf" /></svg>
        </TaskIcon>
        <TaskIcon label="Microsoft Store" dot={false}>
          <svg width="24" height="24" viewBox="0 0 24 24"><path d="M7 6V2.500A1.500 1.500 0 0 1 8.500 1h7A1.500 1.500 0 0 1 17 2.500V6" fill="none" stroke="#28b3ea" strokeWidth="2" /><path d="M.5 5h23v16a3 3 0 0 1-3 3h-17a3 3 0 0 1-3-3z" fill="#16508f" /><path d="M7 10h4.500v4.500H7z" fill="#f25022" /><path d="M12.500 10H17v4.500h-4.500z" fill="#7fba00" /><path d="M7 15.500h4.500V20H7z" fill="#00a4ef" /><path d="M12.500 15.500H17V20h-4.500z" fill="#ffb900" /></svg>
        </TaskIcon>
        <TaskIcon label="计算器">
          <svg width="18" height="24" viewBox="0 0 18 24"><rect width="18" height="24" rx="1" fill="#6b7780" /><path d="M2 2h14v4H2z" fill="#4fd0f5" /><path d="M2 8h4v4H2zM7 8h4v4H7zM12 8h4v4h-4zM2 13h4v4H2zM7 13h4v4H7zM2 18h4v4H2zM7 18h4v4H7z" fill="#d9dee2" /><path d="M12 13h4v9h-4z" fill="#0f4c9a" /></svg>
        </TaskIcon>
        <TaskIcon label="微信">
          <svg width="24" height="24" viewBox="0 0 24 24"><path d="M9 2c5 0 9 3 9 7.500S14 17 9 17l-3-.5L3 18l.5-3C1 13.500 0 12 0 9.500 0 5 4 2 9 2z" fill="#1fce63" /><circle cx="6" cy="8" r="1.200" fill="#075" /><circle cx="12" cy="8" r="1.200" fill="#075" /><path d="M16.500 9.500c4 0 7.500 2.500 7.500 6 0 2-1 3.500-2.500 4.500l.5 2.500-3-1.500c-6 1-9.500-2-9.500-5.500s3-6 7-6z" fill="#ececec" /><circle cx="14" cy="14" r="1" fill="#888" /><circle cx="19" cy="14" r="1" fill="#888" /></svg>
        </TaskIcon>
        <TaskIcon label="Chrome">
          <svg width="24" height="24" viewBox="0 0 24 24"><path d="M12 12 1.600 6A12 12 0 0 1 22.400 6z" fill="#ea4335" /><path d="M12 12V6h10.400A12 12 0 0 1 12 24z" fill="#fbbc04" /><path d="M12 12l5.200 3L12 24A12 12 0 0 1 1.600 6z" fill="#34a853" /><circle cx="12" cy="12" r="6" fill="#fff" /><circle cx="12" cy="12" r="4.600" fill="#1a73e8" /></svg>
        </TaskIcon>
        <TaskIcon label="收银">
          <svg width="24" height="24" viewBox="0 0 24 24"><rect width="24" height="24" rx="1.500" fill="#2b5cff" /><path d="M7 3l5 6 5-6M6 9.500h12M6 14.500h12M12 9v12" fill="none" stroke="#fff" strokeWidth="1.800" /></svg>
        </TaskIcon>
        <TaskIcon label="Excel" active>
          <svg width="24" height="24" viewBox="0 0 24 24"><path d="M12 3.500h11v17H12z" fill="#fff" stroke="#217346" /><path d="M14 6.500h3M18.500 6.500h3M14 9.500h3M18.500 9.500h3M14 12.500h3M18.500 12.500h3M14 15.500h3M18.500 15.500h3" stroke="#217346" strokeWidth="1.500" /><path d="M1 3.500 14 1v22L1 20.500z" fill="#1d6f42" /><path d="M5 8l5 8M10 8l-5 8" stroke="#fff" strokeWidth="2" /></svg>
        </TaskIcon>
      </div>
    </div>
    <div className="flex items-center justify-end pr-[18px] pb-px text-[15px]">
      <svg width="11" height="7" viewBox="0 0 11 7" fill="none" stroke="#222" strokeWidth="1.400" className="mr-[18px]"><path d="M1 6l4.500-5L10 6" /></svg>
      <svg width="18" height="18" viewBox="0 0 18 18" fill="none" stroke="#222" strokeWidth="1.400"><path d="M2 7.500A7 7 0 0 1 15 5M15.500 1.500V5.500H11.500M2 12v4h4M2.500 12.500 6 16" /><circle cx="12.500" cy="13" r="4" fill="#0078d4" stroke="none" /></svg>
      <span className="ml-3.5">中</span>
      <span className="ml-[23px]">拼</span>
      <svg width="18" height="17" viewBox="0 0 18 17" fill="none" stroke="#222" strokeWidth="1.200" className="ml-[22px]"><path d="M11 2H1.500v10.500H13V9M5 15.500h6M8 12.500v3M12.500 1h4v5h-4zM14.500 6v9" /></svg>
      <svg width="18" height="16" viewBox="0 0 18 16" fill="none" stroke="#222" strokeWidth="1.200" className="ml-1.5"><path d="M1 5.500h2.500L7 2.500v11l-3.500-3H1zM9.500 5.500a4 4 0 0 1 0 5M12 3.500a7 7 0 0 1 0 9M14.500 2a10 10 0 0 1 0 12" /></svg>
      <span className="ml-3.5 text-right text-[12px] leading-4">15:09<br />2025/12/16</span>
    </div>
  </div>
);

export default function App() {
  return (
    <div className="flex h-screen flex-col overflow-hidden bg-[#e6e6e6] font-[Noto_Sans,Noto_Sans_CJK_SC,sans-serif] text-[12px] text-[#262626]">
      <TitleBar />
      <Tabs />
      <Ribbon />
      <FormulaBar />
      <main className="flex min-h-0 flex-1">
        <Sheet />
        <VScroll />
      </main>
      <SheetTabs />
      <StatusBar />
      <TaskBar />
    </div>
  );
}
